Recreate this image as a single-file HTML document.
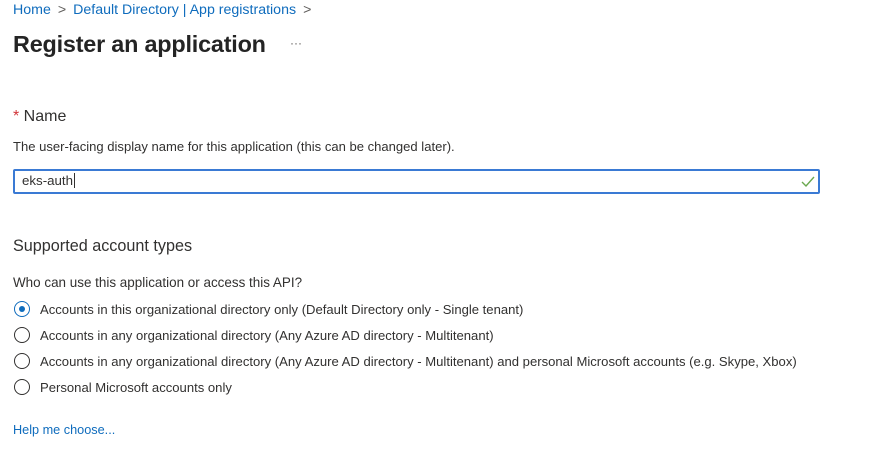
<!DOCTYPE html>
<html><head><meta charset="utf-8"><style>
body{margin:0;width:879px;height:454px;background:#fff;font-family:"Liberation Sans",sans-serif;color:#323130;position:relative;overflow:hidden}
.a{position:absolute;white-space:nowrap}
.blue{color:#0f6cbd}
.r{position:absolute;left:14px;width:16px;height:16px;border:1.3px solid #323130;border-radius:50%;box-sizing:border-box}
.rt{position:absolute;left:40px;font-size:13.08px}
</style></head><body>
<div class="a" style="left:13px;top:2px;font-size:14.2px"><span class="blue">Home</span><span style="color:#605e5c;margin:0 7px">&gt;</span><span class="blue">Default Directory | App registrations</span><span style="color:#605e5c;margin-left:7px">&gt;</span></div>
<div class="a" style="left:13px;top:31px;font-size:23.4px;font-weight:bold;color:#242424;letter-spacing:-0.2px">Register an application</div>
<div class="a" style="left:290px;top:36px;font-size:12px;color:#605e5c">···</div>
<div class="a" style="left:13px;top:108px;font-size:16px"><span style="color:#d13438">*</span> Name</div>
<div class="a" style="left:13px;top:139px;font-size:13.05px">The user-facing display name for this application (this can be changed later).</div>
<div class="a" style="left:13px;top:169px;width:807px;height:25px;border:2px solid #3a7ad4;border-radius:2px;box-sizing:border-box"></div>
<div class="a" style="left:22px;top:173px;font-size:13.3px">eks-auth<span style="border-left:1px solid #323130;margin-left:1px"></span></div>
<svg class="a" style="left:801px;top:176px" width="14" height="11"><path d="M1 6 L5 10 L13 1" stroke="#6aa84f" stroke-width="1.4" fill="none"/></svg>
<div class="a" style="left:13px;top:237px;font-size:16.2px">Supported account types</div>
<div class="a" style="left:13px;top:275px;font-size:13.45px">Who can use this application or access this API?</div>
<div class="r" style="top:301px;border-color:#0f6cbd"><div style="position:absolute;left:3.7px;top:3.7px;width:6px;height:6px;border-radius:50%;background:#0f6cbd"></div></div>
<div class="rt" style="top:302px">Accounts in this organizational directory only (Default Directory only - Single tenant)</div>
<div class="r" style="top:327px"></div>
<div class="rt" style="top:328px">Accounts in any organizational directory (Any Azure AD directory - Multitenant)</div>
<div class="r" style="top:353px"></div>
<div class="rt" style="top:354px">Accounts in any organizational directory (Any Azure AD directory - Multitenant) and personal Microsoft accounts (e.g. Skype, Xbox)</div>
<div class="r" style="top:379px"></div>
<div class="rt" style="top:380px">Personal Microsoft accounts only</div>
<div class="a blue" style="left:13px;top:423px;font-size:12.7px">Help me choose...</div>
</body></html>
